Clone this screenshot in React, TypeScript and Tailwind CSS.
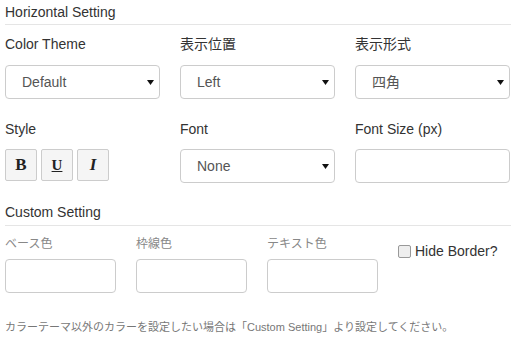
import React from "react";

const Arrow = () => (
  <svg width="7" height="5" viewBox="0 0 7 5" className="shrink-0">
    <path d="M0 0 H7 L3.5 5 Z" fill="#111" />
  </svg>
);

const Select = ({ value }: { value: string }) => (
  <div className="w-[155px] h-[34px] border border-[#ccc] rounded-[4px] bg-white flex items-center justify-between pl-[16px] pr-[5px] text-[14px] text-[#555]">
    <span>{value}</span>
    <Arrow />
  </div>
);

const Label = ({ children }: { children: React.ReactNode }) => (
  <div className="h-[20px] leading-[20px] text-[14px] text-[#333]">{children}</div>
);

export default function App() {
  return (
    <div className="w-[516px] h-[344px] bg-white px-[5px] font-['Liberation_Sans','Noto_Sans_CJK_JP',sans-serif] text-[#333]">
      <div className="pt-[2px] pb-[2px] border-b border-[#e5e5e5] text-[14px] leading-[20px]">Horizontal Setting</div>

      <div className="mt-[9px] flex gap-[20px]">
        <div className="w-[155px] flex flex-col gap-[11px]">
          <Label>Color Theme</Label>
          <Select value="Default" />
        </div>
        <div className="w-[155px] flex flex-col gap-[11px]">
          <Label>表示位置</Label>
          <Select value="Left" />
        </div>
        <div className="w-[155px] flex flex-col gap-[11px]">
          <Label>表示形式</Label>
          <Select value="四角" />
        </div>
      </div>

      <div className="mt-[20px] flex gap-[20px]">
        <div className="w-[155px] flex flex-col gap-[10px]">
          <Label>Style</Label>
          <div className="flex gap-[4px]">
            <div className="w-[32px] h-[32px] border border-[#ccc] rounded-[2px] bg-[#f5f5f5] flex items-center justify-center font-['Liberation_Serif',serif] font-bold text-[17px] text-[#222]">B</div>
            <div className="w-[32px] h-[32px] border border-[#ccc] rounded-[2px] bg-[#f5f5f5] flex items-center justify-center font-['Liberation_Serif',serif] font-bold text-[15px] underline text-[#222]">U</div>
            <div className="w-[32px] h-[32px] border border-[#ccc] rounded-[2px] bg-[#f5f5f5] flex items-center justify-center font-['Liberation_Serif',serif] font-bold italic text-[17px] text-[#222]">I</div>
          </div>
        </div>
        <div className="w-[155px] flex flex-col gap-[10px]">
          <Label>Font</Label>
          <Select value="None" />
        </div>
        <div className="w-[155px] flex flex-col gap-[10px]">
          <Label>Font Size (px)</Label>
          <div className="w-[155px] h-[34px] border border-[#ccc] rounded-[4px] bg-white" />
        </div>
      </div>

      <div className="mt-[19px] pb-[3px] border-b border-[#e5e5e5] text-[14px] leading-[20px]">Custom Setting</div>

      <div className="mt-[10px] flex gap-[20px]">
        {["ベース色", "枠線色", "テキスト色"].map((t) => (
          <div key={t} className="w-[111px] flex flex-col gap-[7px]">
            <div className="h-[16px] leading-[16px] text-[12px] text-[#888]">{t}</div>
            <div className="w-[111px] h-[34px] border border-[#ccc] rounded-[4px] bg-white" />
          </div>
        ))}
        <div className="flex items-center gap-[4px] h-[30px] pt-[1px]">
          <div className="w-[13px] h-[13px] border border-[#999] rounded-[2px] bg-[#eee]" />
          <span className="text-[14px] text-[#333]">Hide Border?</span>
        </div>
      </div>

      <div className="mt-[26px] text-[11px] leading-[16px] text-[#777]">
        カラーテーマ以外のカラーを設定したい場合は「Custom Setting」より設定してください。
      </div>
    </div>
  );
}
